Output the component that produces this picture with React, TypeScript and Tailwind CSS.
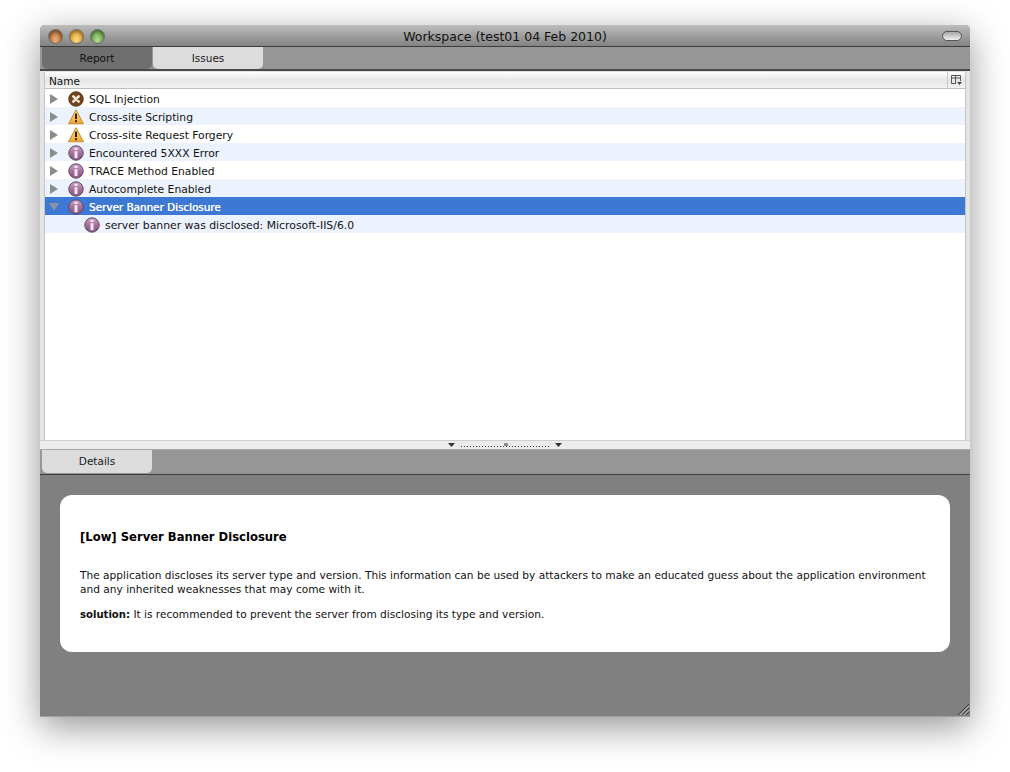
const font = "font-['DejaVu_Sans','Liberation_Sans',sans-serif]";

type Severity = "high" | "medium" | "low";

const issues: { name: string; severity: Severity }[] = [
  { name: "SQL Injection", severity: "high" },
  { name: "Cross-site Scripting", severity: "medium" },
  { name: "Cross-site Request Forgery", severity: "medium" },
  { name: "Encountered 5XXX Error", severity: "low" },
  { name: "TRACE Method Enabled", severity: "low" },
  { name: "Autocomplete Enabled", severity: "low" },
];

function SeverityIcon({ severity }: { severity: Severity }) {
  if (severity === "high") {
    return (
      <svg width="16" height="16" viewBox="0 0 16 16" className="mt-[2px] shrink-0">
        <circle cx="8" cy="8" r="7.3" fill="#74441c" stroke="#4a2a10" strokeWidth="0.8" />
        <path d="M5.3 5.3 L10.7 10.7 M10.7 5.3 L5.3 10.7" stroke="#f3e7d8" strokeWidth="2.6" strokeLinecap="round" />
      </svg>
    );
  }
  if (severity === "medium") {
    return (
      <svg width="16" height="16" viewBox="0 0 16 16" className="mt-[2px] shrink-0">
        <defs>
          <linearGradient id="warn" x1="0" y1="0" x2="0" y2="1">
            <stop offset="0" stopColor="#ffe58a" />
            <stop offset="1" stopColor="#eda52c" />
          </linearGradient>
        </defs>
        <path d="M8 0.8 L15.5 14.8 L0.5 14.8 Z" fill="url(#warn)" stroke="#c78a2a" strokeWidth="1" strokeLinejoin="round" />
        <path d="M8 4.6 V10" stroke="#2b2113" strokeWidth="2" />
        <rect x="7" y="11.2" width="2" height="2" fill="#2b2113" />
      </svg>
    );
  }
  return (
    <svg width="16" height="16" viewBox="0 0 16 16" className="mt-[2px] shrink-0">
      <defs>
        <linearGradient id="info" x1="0" y1="0" x2="0" y2="1">
          <stop offset="0" stopColor="#cba9c9" />
          <stop offset="0.5" stopColor="#a8709f" />
          <stop offset="1" stopColor="#85507f" />
        </linearGradient>
      </defs>
      <circle cx="8" cy="8" r="7.2" fill="url(#info)" stroke="#5f4560" strokeWidth="1" />
      <rect x="6.5" y="2.8" width="3" height="2.2" fill="#f4e9f2" />
      <rect x="6.5" y="6.2" width="3" height="7" fill="#f4e9f2" />
    </svg>
  );
}

function TrafficLight({ from, to }: { from: string; to: string }) {
  return (
    <div
      className={`mt-px h-[15px] w-[15px] rounded-full border border-[#6b6b6b] bg-radial-[at_50%_80%] shadow-[inset_0_2px_3px_rgba(0,0,0,0.35)] ${from} ${to}`}
    />
  );
}

function Arrow({ open }: { open?: boolean }) {
  return (
    <svg width="10" height="10" viewBox="0 0 10 10" className="mt-[2px] shrink-0">
      {open ? <path d="M0 1 H10 L5 9 Z" fill="#8b93a3" /> : <path d="M1 0 V10 L9 5 Z" fill="#8c8c8c" />}
    </svg>
  );
}

function Tab({ label, active }: { label: string; active?: boolean }) {
  return (
    <div
      className={`flex h-full w-[110px] items-center justify-center rounded-b-[5px] pt-[2px] text-[10.5px] ${
        active ? "ml-px bg-[#dcdcdc] text-[#1a1a1a]" : "bg-[#6f6f6f] text-[#111111]"
      }`}
    >
      {label}
    </div>
  );
}

export default function App() {
  return (
    <div className={`${font} h-[772px] w-[1010px] overflow-hidden bg-white pl-[40px] pt-[25px]`}>
      <div className="relative flex h-[692px] w-[930px] flex-col rounded-t-[5px] border-b border-[#a0a0a0] bg-[#808080] shadow-[0_10px_36px_rgba(0,0,0,0.42)]">
        {/* title bar */}
        <div className="relative flex h-[22px] items-center rounded-t-[5px] border-b border-[#3e3e3e] bg-gradient-to-b from-[#bdbdbd] to-[#838383] px-[8px]">
          <div className="flex gap-[6px]">
            <TrafficLight from="from-[#f0b27a]" to="to-[#96501e]" />
            <TrafficLight from="from-[#ffdf80]" to="to-[#d68a10]" />
            <TrafficLight from="from-[#b5dd8e]" to="to-[#4a8a30]" />
          </div>
          <div className="absolute inset-x-0 top-[4px] text-center text-[12.5px] leading-[16px] text-[#111111]">
            Workspace (test01 04 Feb 2010)
          </div>
          <div className="ml-auto h-[10px] w-[20px] rounded-full border border-[#555555] bg-gradient-to-b from-[#a8a8a8] to-[#f0f0f0]" />
        </div>

        {/* top tabs */}
        <div className="flex h-[24px] border-b-2 border-[#4a4a4a] bg-[#969696] pl-[2px]">
          <Tab label="Report" />
          <Tab label="Issues" active />
        </div>

        {/* issue list */}
        <div className="flex h-[379px] flex-col bg-[#e4e4e4] px-[4px] pt-[1px]">
          <div className="flex h-[368px] flex-col border-x border-[#c4c4c4] bg-white">
            <div className="flex h-[17px] items-center justify-between border-b border-[#bdbdbd] bg-gradient-to-b from-[#ffffff] via-[#e6e6e6] to-[#f2f2f2] pl-[4px] text-[10.5px] text-[#111111]">
              <span className="pt-[3px]">Name</span>
              <div className="flex h-full w-[18px] items-center justify-center border-l border-[#c8c8c8]">
                <svg width="11" height="10" viewBox="0 0 11 10">
                  <path d="M0.5 0.5 H9.5 V6 M0.5 0.5 V8.5 H5 M0.5 3 H9.5 M4.5 0.5 V8.5" fill="none" stroke="#555555" />
                  <path d="M6 7 H11 L8.5 10 Z" fill="#444444" />
                </svg>
              </div>
            </div>
            <div>
              {issues.map((issue, i) => (
                <div
                  key={issue.name}
                  className={`flex h-[18px] items-center pl-[4px] text-[10.75px] text-[#111111] ${
                    i % 2 === 1 ? "bg-[#edf3fe]" : "bg-white"
                  }`}
                >
                  <Arrow />
                  <span className="ml-[9px] flex w-[21px] justify-start">
                    <SeverityIcon severity={issue.severity} />
                  </span>
                  <span className="pt-[4px]">{issue.name}</span>
                </div>
              ))}
              <div className="flex h-[18px] items-center bg-[#3d78d5] pl-[4px] text-[10.4px] text-white">
                <Arrow open />
                <span className="ml-[9px] flex w-[21px]">
                  <SeverityIcon severity="low" />
                </span>
                <span className="pt-[4px] [text-shadow:0.3px_0_0_white]">Server Banner Disclosure</span>
              </div>
              <div className="flex h-[18px] items-center bg-[#edf3fe] pl-[39px] text-[10.85px] text-[#111111]">
                <span className="flex w-[21px]">
                  <SeverityIcon severity="low" />
                </span>
                <span className="pt-[4px]">server banner was disclosed: Microsoft-IIS/6.0</span>
              </div>
            </div>
          </div>
          {/* splitter */}
          <div className="relative -mx-[4px] flex h-[10px] items-center justify-center gap-[3px] border-t border-[#d0d0d0] border-b border-b-[#a8a8a8] bg-[#ececec]">
            <svg width="7" height="5" viewBox="0 0 7 5">
              <path d="M0 0 H7 L3.5 4 Z" fill="#333333" />
            </svg>
            <div className="mx-[3px] mt-[2px] h-px w-[88px] bg-[repeating-linear-gradient(90deg,#333333_0,#333333_1px,transparent_1px,transparent_3px)]" />
            <svg width="7" height="5" viewBox="0 0 7 5">
              <path d="M0 0 H7 L3.5 4 Z" fill="#333333" />
            </svg>
            <div className="absolute left-[464px] top-[2px] h-[3px] w-[4px] rounded-t-[1px] bg-[#8a8a8a]" />
          </div>
        </div>

        {/* details tab */}
        <div className="flex h-[25px] border-b border-[#3e3e3e] bg-[#969696] pl-[2px]">
          <div className="mb-[1px] flex w-[110px] items-center justify-center rounded-b-[5px] bg-[#dcdcdc] text-[10.5px] text-[#1a1a1a]">
            Details
          </div>
        </div>

        {/* details panel */}
        <div className="flex-1 px-[20px] pt-[20px]">
          <div className="h-[157px] rounded-[12px] bg-white px-[20px] pt-[33px] text-[10.6px] leading-[14px] text-[#111111]">
            <h2 className="text-[11.6px] font-bold leading-[18px] text-black">[Low] Server Banner Disclosure</h2>
            <p className="mt-[22px]">
              The application discloses its server type and version. This information can be used by attackers to make
              an educated guess about the application environment and any inherited weaknesses that may come with it.
            </p>
            <p className="mt-[11px]">
              <b className="text-[10.1px]">solution:</b> It is recommended to prevent the server from disclosing its type and version.
            </p>
          </div>
        </div>

        {/* resize grip */}
        <svg width="13" height="13" viewBox="0 0 13 13" className="absolute bottom-0 right-0">
          <path d="M1 12 L12 1 M5 12 L12 5 M9 12 L12 9" stroke="#3f3f3f" strokeWidth="1" />
          <path d="M3 12 L12 3 M7 12 L12 7" stroke="#b0b0b0" strokeWidth="1" />
        </svg>
      </div>
    </div>
  );
}
